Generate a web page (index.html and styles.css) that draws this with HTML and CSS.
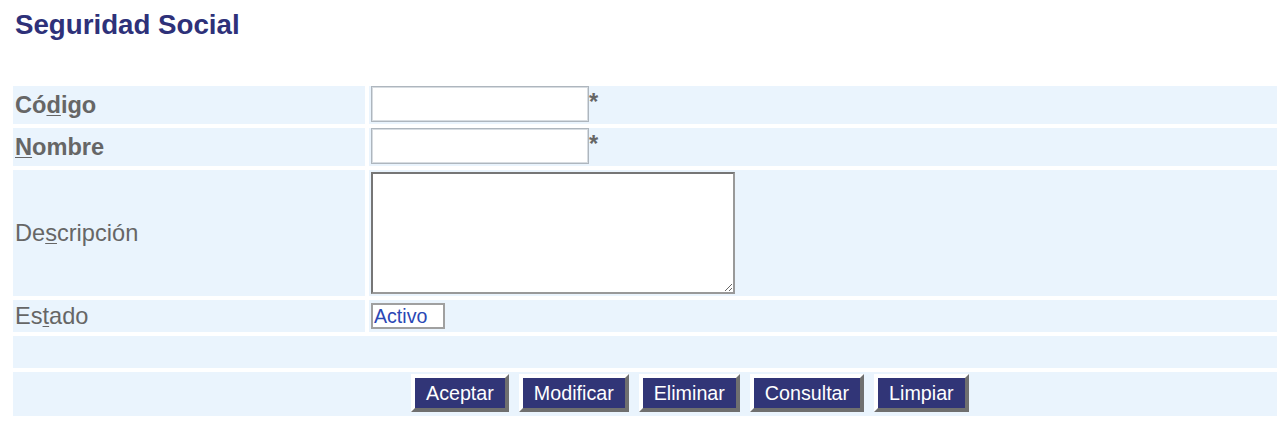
FILE: index.html
```html
<!DOCTYPE html>
<html lang="es">
<head>
<meta charset="utf-8">
<title>Seguridad Social</title>
<link rel="stylesheet" href="styles.css">
</head>
<body>
<div class="page">
  <h1 class="title">Seguridad Social</h1>
  <form class="form">
    <div class="cell label bold r1">Có<u>d</u>igo</div>
    <div class="cell value r1">
      <input class="text" type="text">
      <span class="req">*</span>
    </div>
    <div class="cell label bold r2"><u>N</u>ombre</div>
    <div class="cell value r2">
      <input class="text" type="text">
      <span class="req">*</span>
    </div>
    <div class="cell label r3">De<u>s</u>cripción</div>
    <div class="cell value r3 pad2">
      <textarea class="area"></textarea>
    </div>
    <div class="cell label r4">Es<u>t</u>ado</div>
    <div class="cell value r4 mid">
      <span class="state">Activo</span>
    </div>
    <div class="cell full r5"></div>
    <div class="cell full r6 buttons">
      <button type="button" class="btn">Aceptar</button>
      <button type="button" class="btn">Modificar</button>
      <button type="button" class="btn">Eliminar</button>
      <button type="button" class="btn">Consultar</button>
      <button type="button" class="btn">Limpiar</button>
    </div>
  </form>
</div>
</body>
</html>
```
FILE: styles.css
```css
html, body {
  margin: 0;
  padding: 0;
  background: #ffffff;
}

body {
  font-family: "Liberation Sans", Arial, Helvetica, sans-serif;
}

.page {
  padding: 9px 0 0 13px;
}

.title {
  margin: 0 0 45px 0;
  padding-left: 2px;
  font-size: 27.7px;
  line-height: 32px;
  font-weight: bold;
  color: #2e3179;
}

.form {
  display: grid;
  width: 1264px;
  grid-template-columns: 352px 908px;
  grid-template-rows: 38px 38px 126px 32px 32px 44px;
  gap: 4px;
  margin: 0;
}

.cell {
  background: #eaf4fd;
  box-sizing: border-box;
}

.label {
  display: flex;
  align-items: center;
  padding-left: 2px;
  font-size: 23.6px;
  color: #666666;
}

.label.bold {
  font-weight: bold;
}

.label u {
  text-decoration-thickness: 1px;
  text-underline-offset: 2px;
}

.value {
  display: flex;
  align-items: flex-start;
  padding-left: 2px;
}

.value.pad2 {
  padding-top: 2px;
}

.value.mid {
  padding-top: 3px;
}

.full {
  grid-column: 1 / span 2;
}

.text {
  box-sizing: border-box;
  width: 218px;
  height: 36px;
  margin: 0;
  border: 1px solid #aeb6be;
  box-shadow: inset 0 0 0 1px #d7dce1;
  background: #ffffff;
  padding: 2px 4px;
  font-family: inherit;
  font-size: 19px;
}

.req {
  margin-top: 3px;
  font-size: 23.6px;
  line-height: 27px;
  font-weight: bold;
  color: #666666;
}

.area {
  box-sizing: border-box;
  width: 364px;
  height: 122px;
  margin: 0;
  border-style: solid;
  border-width: 2px;
  border-color: #767676 #999999 #999999 #767676;
  background: #ffffff;
  font-family: inherit;
  font-size: 16px;
  padding: 2px;
}

.state {
  box-sizing: border-box;
  display: inline-block;
  width: 74px;
  height: 26px;
  border: 2px solid #a0a0a0;
  background: #ffffff;
  padding: 0 0 0 1px;
  font-size: 19.6px;
  line-height: 22px;
  color: #2a47b5;
}

.buttons {
  display: flex;
  align-items: flex-start;
  gap: 10px;
  padding: 2px 0 0 398px;
}

.btn {
  box-sizing: border-box;
  height: 38px;
  margin: 0;
  padding: 3px 11px;
  border-style: solid;
  border-width: 4px;
  border-color: #ffffff #6f6f6f #6f6f6f #ffffff;
  background: #313577;
  color: #ffffff;
  font-family: inherit;
  font-size: 19.7px;
  line-height: 23px;
  cursor: pointer;
}
```
